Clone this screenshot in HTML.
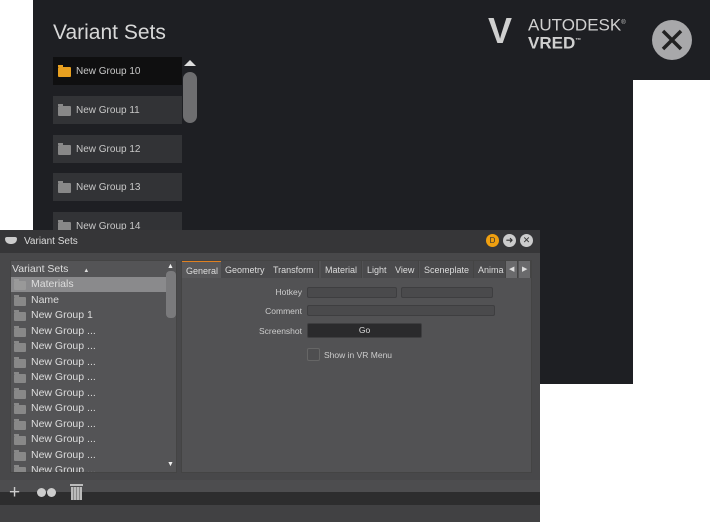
<!DOCTYPE html><html><head><style>
*{margin:0;padding:0;box-sizing:border-box}
body{width:710px;height:522px;background:#fff;position:relative;overflow:hidden;font-family:"Liberation Sans",sans-serif}
.a{position:absolute}
.dk{left:33px;top:0;width:600px;height:384px;background:#1e1f23}
.dk2{left:600px;top:0;width:110px;height:80px;background:#1e1f23}
.card{left:53px;width:129px;height:28px;background:#323336;color:#c8c8c8;font-size:10px;line-height:30px;padding-left:23px}
.card i{position:absolute;left:5px;top:10px;width:13px;height:10px;background:#888;border-radius:1px}
.card i:before,.row i:before{content:"";position:absolute;left:0;top:-2px;width:5px;height:2px;background:inherit}
.win{left:0;top:230px;width:540px;height:292px;background:#48484a}
.tb{left:0;top:230px;width:540px;height:23px;background:#363638;color:#ddd;font-size:10px;line-height:23px;padding-left:24px}
.lp{left:10px;top:260px;width:167px;height:213px;background:#545456;border:1px solid #444}
.row{position:absolute;left:0;width:155px;height:15px;color:#ddd;font-size:10.5px;line-height:15px;padding-left:20px}
.row i{position:absolute;left:3px;top:4px;width:12px;height:9px;background:#888;border-radius:1px}
.rp{left:181px;top:260px;width:351px;height:213px;background:#525254;border:1px solid #444}
.tab{position:absolute;top:0;height:17px;font-size:9px;color:#ddd;line-height:18px;background:#4a4a4c;border-right:1px solid #444;padding:0 4px}
.lbl{position:absolute;font-size:8.5px;color:#ccc;text-align:right;width:60px;left:60px}
.fld{position:absolute;height:11px;background:#4a4a4c;border:1px solid #3e3e40;border-radius:2px}
</style></head><body>
<div class="a dk"></div><div class="a dk2"></div>
<div class="a" style="left:53px;top:21px;font-size:21px;color:#d8d8d8">Variant Sets</div>
<div class="a card" style="top:57px;background:#0f0f10"><i style="background:#e8a020"></i>New Group 10</div>
<div class="a card" style="top:96px"><i></i>New Group 11</div>
<div class="a card" style="top:135px"><i></i>New Group 12</div>
<div class="a card" style="top:173px"><i></i>New Group 13</div>
<div class="a card" style="top:212px"><i></i>New Group 14</div>
<div class="a" style="left:184px;top:60px;width:0;height:0;border-left:6px solid transparent;border-right:6px solid transparent;border-bottom:6px solid #ddd"></div>
<div class="a" style="left:183px;top:72px;width:14px;height:51px;background:#6e6e70;border-radius:7px"></div>
<div class="a" style="left:488px;top:13px;font-size:36px;font-weight:bold;color:#d0d0d0;line-height:36px">V</div>
<div class="a" style="left:528px;top:14px;font-size:17px;color:#d0d0d0;line-height:18px">AUTODESK<sup style="font-size:6px">®</sup></div>
<div class="a" style="left:528px;top:32px;font-size:17px;font-weight:bold;color:#d0d0d0;line-height:18px">VRED<sup style="font-size:6px">™</sup></div>
<svg class="a" style="left:651px;top:19px" width="42" height="42"><circle cx="21" cy="21" r="20" fill="#a8a8aa"/><path d="M12 12L30 30M30 12L12 30" stroke="#222" stroke-width="3.5"/></svg>
<div class="a win"></div>
<div class="a tb">Variant Sets</div>
<div class="a" style="left:5px;top:237px;width:12px;height:7px;background:#ccc;border-radius:2px 2px 5px 5px"></div>
<div class="a" style="left:486px;top:234px;width:13px;height:13px;border-radius:50%;background:#f0a010;font-size:8px;text-align:center;line-height:13px;color:#333">D</div>
<div class="a" style="left:503px;top:234px;width:13px;height:13px;border-radius:50%;background:#ccc;font-size:9px;text-align:center;line-height:13px;color:#333">➜</div>
<div class="a" style="left:520px;top:234px;width:13px;height:13px;border-radius:50%;background:#ccc;font-size:9px;text-align:center;line-height:13px;color:#333">✕</div>
<div class="a lp">
<div class="a" style="left:0;top:0;width:155px;height:16px;color:#ddd;font-size:10.5px;line-height:16px;padding-left:1px">Variant Sets <span style="font-size:6px;margin-left:12px">▲</span></div>
<div class="row" style="top:16px;background:#8a8a8c"><i style="background:#999"></i>Materials</div>
<div class="row" style="top:31.5px"><i></i>Name</div>
<div class="row" style="top:47px"><i></i>New Group 1</div>
<div class="row" style="top:62.5px"><i></i>New Group ...</div>
<div class="row" style="top:78px"><i></i>New Group ...</div>
<div class="row" style="top:93.5px"><i></i>New Group ...</div>
<div class="row" style="top:109px"><i></i>New Group ...</div>
<div class="row" style="top:124.5px"><i></i>New Group ...</div>
<div class="row" style="top:140px"><i></i>New Group ...</div>
<div class="row" style="top:155.5px"><i></i>New Group ...</div>
<div class="row" style="top:171px"><i></i>New Group ...</div>
<div class="row" style="top:186.5px"><i></i>New Group ...</div>
<div class="row" style="top:202px;height:9px;overflow:hidden"><i></i>New Group ...</div>
<div class="a" style="left:155px;top:10px;width:10px;height:47px;background:#7a7a7c;border-radius:4px"></div>
<div class="a" style="left:156px;top:2px;font-size:7px;color:#eee">▲</div>
<div class="a" style="left:156px;top:200px;font-size:7px;color:#eee">▼</div>
</div>
<div class="a rp">
<div class="tab" style="left:0;background:#58585a;border-top:1px solid #e08020">General</div>
<div class="tab" style="left:39px">Geometry</div>
<div class="tab" style="left:87px">Transform</div>
<div class="tab" style="left:139px">Material</div>
<div class="tab" style="left:181px">Light</div>
<div class="tab" style="left:209px">View</div>
<div class="tab" style="left:238px">Sceneplate</div>
<div class="tab" style="left:292px;width:32px;overflow:hidden">Anima</div>
<div class="tab" style="left:324px;width:12px;background:#6a6a6c;font-size:7px;padding:0 3px">◀</div>
<div class="tab" style="left:337px;width:12px;background:#6a6a6c;font-size:7px;padding:0 3px">▶</div>
<div class="lbl" style="top:26px">Hotkey</div>
<div class="lbl" style="top:45px">Comment</div>
<div class="lbl" style="top:65px">Screenshot</div>
<div class="fld" style="left:125px;top:26px;width:90px"></div>
<div class="fld" style="left:219px;top:26px;width:92px"></div>
<div class="fld" style="left:125px;top:44px;width:188px"></div>
<div class="fld" style="left:125px;top:62px;width:115px;height:15px;background:#2a2a2c;color:#ddd;font-size:8.5px;text-align:center;line-height:13px">Go</div>
<div class="fld" style="left:125px;top:87px;width:13px;height:13px;background:#4e4e50;border-color:#666"></div>
<div class="a" style="left:142px;top:89px;font-size:8.5px;color:#ccc">Show in VR Menu</div>
</div>
<div class="a" style="left:0;top:480px;width:540px;height:12px;background:#4d4d4f"></div>
<div class="a" style="left:0;top:492px;width:540px;height:13px;background:#2d2d2e"></div>
<div class="a" style="left:0;top:505px;width:540px;height:17px;background:#414143"></div>
<div class="a" style="left:9px;top:483px;font-size:19px;color:#ccc;line-height:20px">+</div>
<div class="a" style="left:37px;top:488px;width:9px;height:9px;border-radius:50%;background:#ccc"></div>
<div class="a" style="left:47px;top:488px;width:9px;height:9px;border-radius:50%;background:#ccc"></div>
<div class="a" style="left:70px;top:484px;width:13px;height:2px;background:#bbb"></div>
<div class="a" style="left:71px;top:487px;width:11px;height:13px;background:repeating-linear-gradient(90deg,#bbb 0 2px,#888 2px 3px)"></div>
</body></html>
